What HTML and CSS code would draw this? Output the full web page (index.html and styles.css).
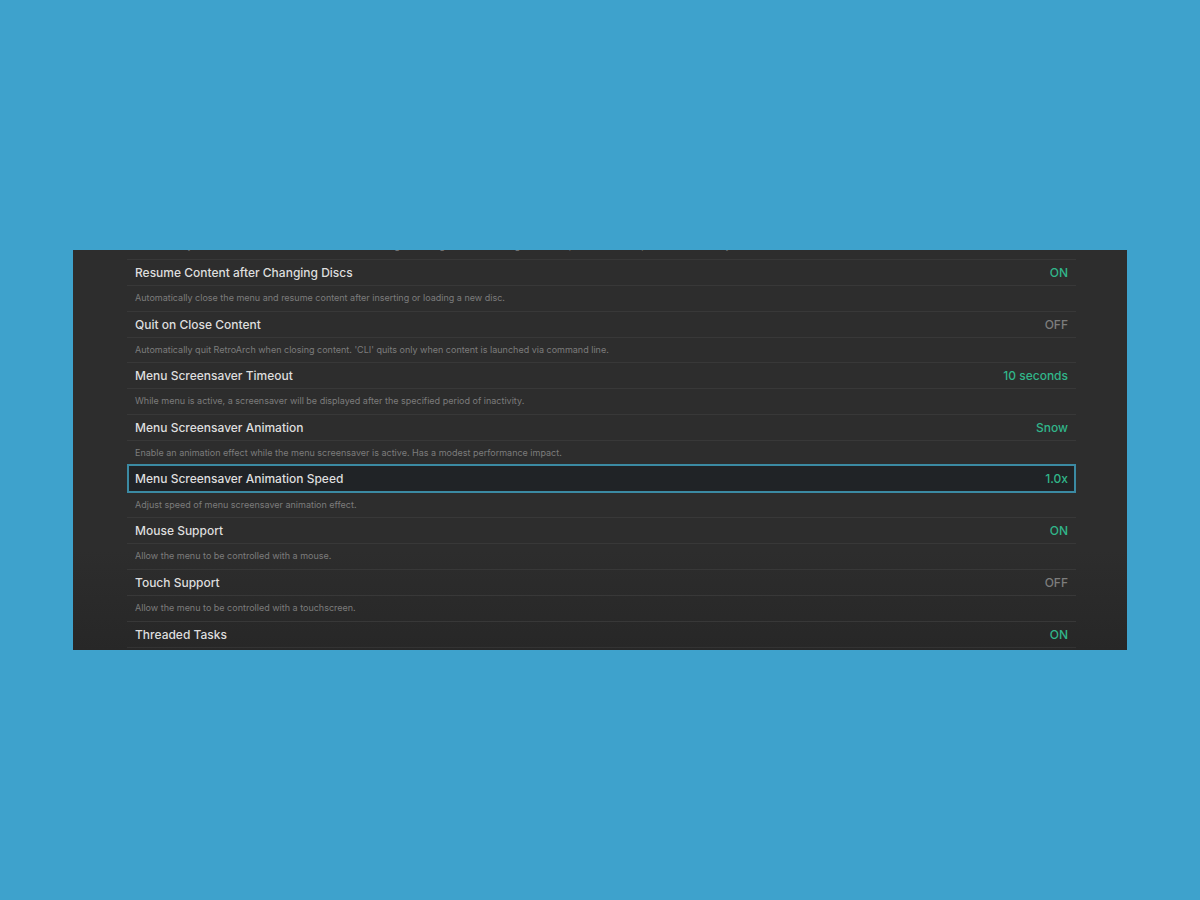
FILE: index.html
```html
<!DOCTYPE html>
<html lang="en">
<head>
<meta charset="utf-8">
<title>User Interface Settings</title>
<link rel="stylesheet" href="styles.css">
</head>
<body>
<main class="panel">
  <ul class="settings">
    <li class="entry entry-scrolled">
      <p class="help">Automatically close the menu and resume content after saving or loading a state. Disabling this can improve save state performance on very slow devices.</p>
    </li>
    <li class="entry">
      <button class="setting" aria-describedby="h1"><span>Resume Content after Changing Discs</span><span class="value">ON</span></button>
      <p class="help" id="h1">Automatically close the menu and resume content after inserting or loading a new disc.</p>
    </li>
    <li class="entry">
      <button class="setting" aria-describedby="h2"><span>Quit on Close Content</span><span class="value value-off">OFF</span></button>
      <p class="help" id="h2">Automatically quit RetroArch when closing content. 'CLI' quits only when content is launched via command line.</p>
    </li>
    <li class="entry">
      <button class="setting" aria-describedby="h3"><span>Menu Screensaver Timeout</span><span class="value">10 seconds</span></button>
      <p class="help" id="h3">While menu is active, a screensaver will be displayed after the specified period of inactivity.</p>
    </li>
    <li class="entry">
      <button class="setting" aria-describedby="h4"><span>Menu Screensaver Animation</span><span class="value">Snow</span></button>
      <p class="help" id="h4">Enable an animation effect while the menu screensaver is active. Has a modest performance impact.</p>
    </li>
    <li class="entry">
      <button class="setting setting-selected" aria-describedby="h5"><span>Menu Screensaver Animation Speed</span><span class="value">1.0x</span></button>
      <p class="help help-selected" id="h5">Adjust speed of menu screensaver animation effect.</p>
    </li>
    <li class="entry">
      <button class="setting" aria-describedby="h6"><span>Mouse Support</span><span class="value">ON</span></button>
      <p class="help" id="h6">Allow the menu to be controlled with a mouse.</p>
    </li>
    <li class="entry">
      <button class="setting" aria-describedby="h7"><span>Touch Support</span><span class="value value-off">OFF</span></button>
      <p class="help" id="h7">Allow the menu to be controlled with a touchscreen.</p>
    </li>
    <li class="entry entry-last">
      <button class="setting"><span>Threaded Tasks</span><span class="value">ON</span></button>
    </li>
  </ul>
</main>
</body>
</html>
```
FILE: styles.css
```css
* {
  box-sizing: border-box;
}

body {
  margin: 0;
  min-height: 100vh;
  padding: 0 73px;
  display: flex;
  align-items: center;
  background: #3ea2cc;
  font-family: Inter, "Liberation Sans", sans-serif;
}

.panel {
  flex: 1;
  overflow: hidden;
  padding: 0 51px 2px 54px;
  background: linear-gradient(#2d2d2d 75%, #272727);
}

.settings {
  margin: 0;
  padding: 0;
  list-style: none;
}

.entry-scrolled {
  margin-top: -17px;
}

.setting {
  display: flex;
  justify-content: space-between;
  align-items: center;
  width: 100%;
  height: 26px;
  margin: 0;
  padding: 0 8px;
  border: 0;
  border-top: 1px solid #383838;
  background: none;
  color: #dedede;
  font: 500 12px/20px Inter, "Liberation Sans", sans-serif;
  text-align: left;
}

.setting-selected {
  height: 29px;
  margin: -2px 0 -1px;
  padding: 0 6px;
  border: 2px solid #3b8aa3;
  background: #202326;
}

.value {
  color: #31b68a;
}

.value-off {
  color: #7d7d7d;
}

.help {
  height: 26px;
  margin: 0;
  padding: 0 8px;
  border-top: 1px solid #383838;
  color: #7c7c7c;
  font-size: 9px;
  line-height: 24px;
  white-space: nowrap;
}

.entry:nth-child(3n) .help {
  height: 25px;
}

.entry .help-selected {
  border-color: transparent;
}

.entry-last {
  border-bottom: 1px solid #333333;
}
```
